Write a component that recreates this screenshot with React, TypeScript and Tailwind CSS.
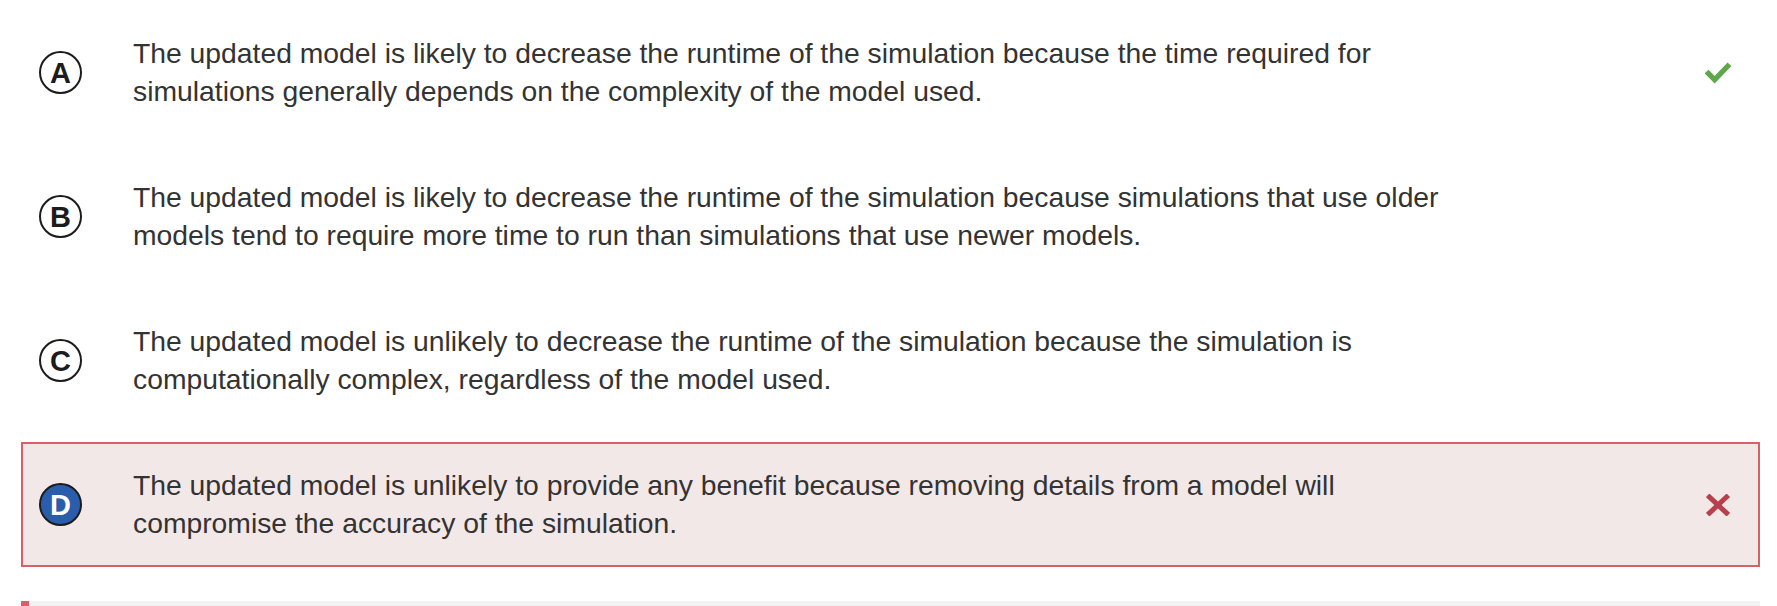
import React from "react";

type Choice = {
  letter: string;
  text: string;
  status?: "correct" | "wrong";
};

const choices: Choice[] = [
  {
    letter: "A",
    text: "The updated model is likely to decrease the runtime of the simulation because the time required for simulations generally depends on the complexity of the model used.",
    status: "correct",
  },
  {
    letter: "B",
    text: "The updated model is likely to decrease the runtime of the simulation because simulations that use older models tend to require more time to run than simulations that use newer models.",
  },
  {
    letter: "C",
    text: "The updated model is unlikely to decrease the runtime of the simulation because the simulation is computationally complex, regardless of the model used.",
  },
  {
    letter: "D",
    text: "The updated model is unlikely to provide any benefit because removing details from a model will compromise the accuracy of the simulation.",
    status: "wrong",
  },
];

const CheckIcon = () => (
  <svg width="27" height="22" viewBox="0 0 27 22">
    <polyline
      points="3.5,11.5 10,18 23.5,4"
      fill="none"
      stroke="#5ea84b"
      strokeWidth="5.5"
      strokeLinecap="square"
    />
  </svg>
);

const CrossIcon = () => (
  <svg width="24" height="22" viewBox="0 0 24 22">
    <g stroke="#b6414b" strokeWidth="5" strokeLinecap="square">
      <line x1="3.5" y1="3" x2="20.5" y2="19" />
      <line x1="20.5" y1="3" x2="3.5" y2="19" />
    </g>
  </svg>
);

const Badge = ({ letter, selected }: { letter: string; selected: boolean }) => (
  <div
    className={`w-[43px] h-[43px] shrink-0 rounded-full border-2 border-[#1c1c1c] flex items-center justify-center font-bold text-[29px] leading-none ${
      selected ? "bg-[#2a5dab] text-white" : "bg-white text-[#1c1c1c]"
    }`}
  >
    <span className="mt-[1px]">{letter}</span>
  </div>
);

const App = () => {
  return (
    <main
      className="min-h-screen bg-white pt-[10px] pl-[21px] pr-[17px]"
      style={{ fontFamily: '"Liberation Sans", Arial, Helvetica, sans-serif' }}
    >
      <div className="flex flex-col gap-[19px]">
        {choices.map((c) => {
          const wrong = c.status === "wrong";
          return (
            <div
              key={c.letter}
              className={`h-[125px] flex items-center border-2 pl-[16px] pr-[27px] ${
                wrong ? "border-[#d7606a] bg-[#f3e8e8]" : "border-transparent bg-white"
              }`}
            >
              <Badge letter={c.letter} selected={wrong} />
              <p className="ml-[51px] w-[1345px] text-[28.3px] leading-[37.5px] text-[#333333]">
                {c.text}
              </p>
              <div className="ml-auto w-[26px] flex justify-center">
                {c.status === "correct" && <CheckIcon />}
                {c.status === "wrong" && <CrossIcon />}
              </div>
            </div>
          );
        })}
      </div>
      <div className="mt-[34px] h-[60px] bg-[#f2f2f2] border-l-[8px] border-[#d7606a]" />
    </main>
  );
};

export default App;
